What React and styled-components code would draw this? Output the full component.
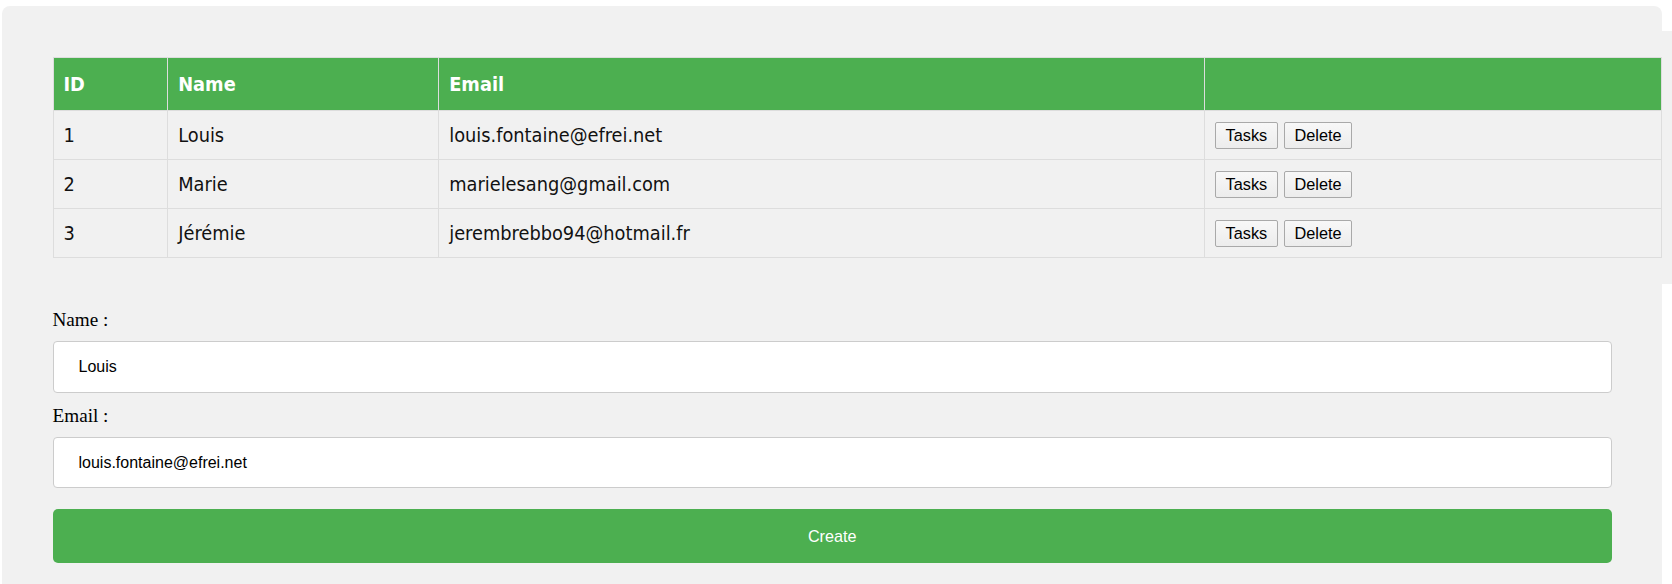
import React from "react";
import styled, { createGlobalStyle } from "styled-components";

const GlobalStyle = createGlobalStyle`
  html, body {
    margin: 0;
    padding: 0;
    background: #ffffff;
    overflow: hidden;
  }
`;

const Page = styled.div`
  padding: 6px 0 0 2px;
`;

const Panel = styled.div`
  box-sizing: border-box;
  width: 1660px;
  min-height: 600px;
  background: #f1f1f1;
  border-radius: 8px 8px 0 0;
  padding: 25px 0 30px 50.5px;
`;

const TableWrap = styled.div`
  width: 1650px;
  padding: 26px 0;
  background: #f1f1f1;
`;

const Table = styled.table`
  border-collapse: collapse;
  table-layout: fixed;
  width: 1609px;
  font-family: "DejaVu Sans Condensed", "DejaVu Sans", sans-serif;
  font-size: 19.8px;
  color: #111;
`;

const HeadCell = styled.th`
  background: #4caf50;
  color: #ffffff;
  font-weight: bold;
  text-align: left;
  height: 52px;
  padding: 0 10px;
  border: 1px solid #dddddd;
`;

const Cell = styled.td`
  height: 48px;
  padding: 0 10px;
  border: 1px solid #dddddd;
  background: #f1f1f1;
`;

const Actions = styled.div`
  display: flex;
  gap: 6.5px;
`;

const ActionButton = styled.button`
  box-sizing: border-box;
  height: 27px;
  padding: 0 9.4px;
  font-family: "Liberation Sans", Arial, sans-serif;
  font-size: 16.3px;
  color: #000;
  background: linear-gradient(#f8f8f8, #ececec);
  border: 1px solid #a9a9a9;
  border-radius: 2px;
`;

const Form = styled.div`
  width: 1559.4px;
  padding-top: 25px;
`;

const Label = styled.label`
  display: block;
  font-family: "Liberation Serif", "Times New Roman", serif;
  font-size: 19.2px;
  line-height: 22px;
  color: #000;
  margin-bottom: 10px;
`;

const Input = styled.input`
  display: block;
  box-sizing: border-box;
  width: 100%;
  height: ${(p) => p.$h}px;
  margin: 0 0 12px;
  padding: 0 25px;
  font-family: "Liberation Sans", Arial, sans-serif;
  font-size: 16px;
  color: #000;
  background: #ffffff;
  border: 1px solid #cccccc;
  border-radius: 4px;
  outline: none;
`;

const CreateButton = styled.button`
  display: block;
  box-sizing: border-box;
  width: 100%;
  height: 54.7px;
  margin-top: 20.7px;
  font-family: "Liberation Sans", Arial, sans-serif;
  font-size: 16.2px;
  color: #ffffff;
  background: #4caf50;
  border: none;
  border-radius: 5px;
`;

const users = [
  { id: 1, name: "Louis", email: "louis.fontaine@efrei.net" },
  { id: 2, name: "Marie", email: "marielesang@gmail.com" },
  { id: 3, name: "Jérémie", email: "jerembrebbo94@hotmail.fr" },
];

export default function App() {
  return (
    <>
      <GlobalStyle />
      <Page>
        <Panel>
          <TableWrap>
            <Table>
              <colgroup>
                <col style={{ width: 114.7 }} />
                <col style={{ width: 271 }} />
                <col style={{ width: 766 }} />
                <col style={{ width: 457 }} />
              </colgroup>
              <thead>
                <tr>
                  <HeadCell>ID</HeadCell>
                  <HeadCell>Name</HeadCell>
                  <HeadCell>Email</HeadCell>
                  <HeadCell></HeadCell>
                </tr>
              </thead>
              <tbody>
                {users.map((u) => (
                  <tr key={u.id}>
                    <Cell>{u.id}</Cell>
                    <Cell>{u.name}</Cell>
                    <Cell>{u.email}</Cell>
                    <Cell>
                      <Actions>
                        <ActionButton>Tasks</ActionButton>
                        <ActionButton>Delete</ActionButton>
                      </Actions>
                    </Cell>
                  </tr>
                ))}
              </tbody>
            </Table>
          </TableWrap>
          <Form>
            <Label>Name :</Label>
            <Input $h={52} defaultValue="Louis" />
            <Label>Email :</Label>
            <Input $h={51} defaultValue="louis.fontaine@efrei.net" />
            <CreateButton>Create</CreateButton>
          </Form>
        </Panel>
      </Page>
    </>
  );
}
